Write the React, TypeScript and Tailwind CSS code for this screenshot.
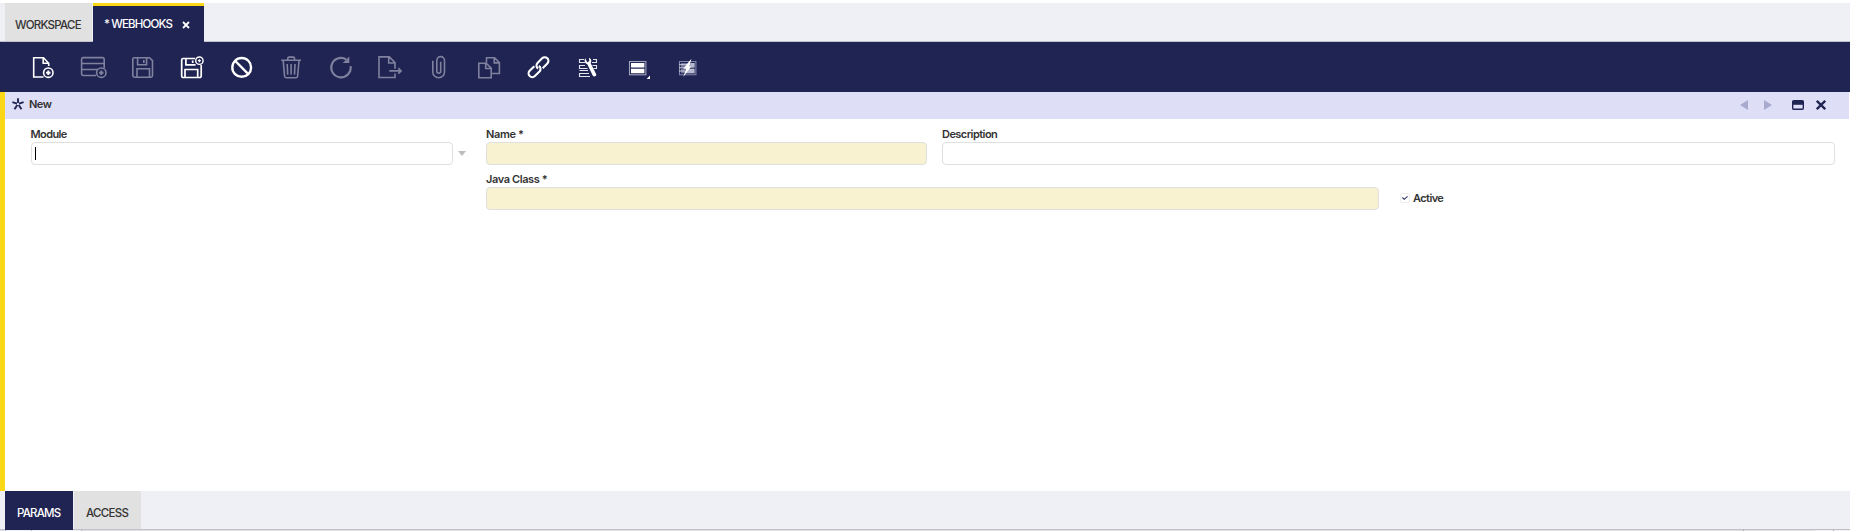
import React from "react";

type IconProps = { children: React.ReactNode; slot: string; dim?: boolean };

function Tool({ children, slot, dim }: IconProps) {
  return (
    <button className={`${slot} ${dim ? "text-[#7f819e]" : "text-white"} h-[30px] shrink-0`}>
      <svg width="30" height="30" viewBox="0 0 30 30" fill="none" stroke="currentColor" strokeWidth="1.6" className="block">
        {children}
      </svg>
    </button>
  );
}

function Toolbar() {
  return (
    <div className="flex h-[50px] items-center bg-[#202452] pl-7">
      <Tool slot="w-[50px]">
        <path d="M15.5 25H5.7V5.7h9.8l5.2 5.5V14M15.2 5.7v5.6h5.5" />
        <circle cx="20.3" cy="20.7" r="4.7" />
        <path d="M20.3 18.5v4.4M18.1 20.7h4.4" strokeWidth="1.9" />
      </Tool>
      <Tool slot="w-[49px]" dim>
        <path d="M18 23.5H5.2a1.6 1.6 0 0 1-1.6-1.6V7.2a1.6 1.6 0 0 1 1.6-1.6h19.4a1.6 1.6 0 0 1 1.6 1.6V16M3.6 11.5h22.6M3.6 17.5h16" />
        <circle cx="23.3" cy="20.7" r="4.7" />
        <path d="M23.3 18.5v4.4M21.1 20.7h4.4" strokeWidth="1.9" />
      </Tool>
      <Tool slot="w-[50px]" dim>
        <path d="M6.9 5.7h15.6l3 3v14.9a1.6 1.6 0 0 1-1.6 1.6H7.4a1.6 1.6 0 0 1-1.6-1.6V7a1.3 1.3 0 0 1 1.1-1.3ZM10.6 5.7v7h9v-7M16.8 8v3M10 25v-8.2h12.5V25" />
      </Tool>
      <Tool slot="w-[50px]">
        <path d="M18 6.5H6.1A1.4 1.4 0 0 0 4.7 7.9v16.2a1.4 1.4 0 0 0 1.4 1.4h16.7a1.4 1.4 0 0 0 1.4-1.4V13M8.9 6.5v6.4h9.7M15.7 8.5v2.4M8 25.5v-8h12.7v8" strokeWidth="1.7" />
        <circle cx="22.4" cy="8.7" r="3.7" strokeWidth="1.4" />
        <path d="M22.4 7.2v3M20.9 8.7h3" strokeWidth="1.3" />
      </Tool>
      <Tool slot="w-[49px]">
        <circle cx="14.7" cy="15.4" r="9.4" strokeWidth="2.4" />
        <path d="m8.3 9 12.8 12.8" strokeWidth="2.4" />
      </Tool>
      <Tool slot="w-[50px]" dim>
        <path d="M5.2 8.3H25M11.8 8V6.2c0-.7.5-1.1 1.2-1.1h4.3c.7 0 1.2.4 1.2 1.1V8M7.2 8.7l1.4 15.6a1.5 1.5 0 0 0 1.5 1.4h10a1.5 1.5 0 0 0 1.5-1.4L23 8.7M11.2 12l.5 10.6M15.1 12v10.6M19 12l-.5 10.6" />
      </Tool>
      <Tool slot="w-[49px]" dim>
        <path d="M20 7.3a9.7 9.7 0 1 0 4.6 6.9" strokeWidth="2.2" />
        <path d="M23.3 4.5v6.6h-6.6Z" fill="currentColor" stroke="none" />
      </Tool>
      <Tool slot="w-[50px]" dim>
        <path d="M20 21.5v4H4V4.9h10.3l5.7 5.8v6M13.7 5v6H20M14.3 18.9h12M23.3 16.2l2.8 2.7-2.8 2.7" />
      </Tool>
      <Tool slot="w-[49px]" dim>
        <path d="M7.8 8.7v11.2a5.8 5.8 0 0 0 11.7 0V8.5a3.8 3.8 0 0 0-7.7 0v10.8a1.9 1.9 0 0 0 3.9 0V9.8" />
      </Tool>
      <Tool slot="w-[50px]" dim>
        <path d="M12.5 10.5V5.7h8.1l4.8 4.9v10.9h-8M20.2 6v4.9h5M4.8 11.2h7.4l5 5v9.6H4.8ZM11.7 11.5v5h5.2" />
      </Tool>
      <Tool slot="w-[49px]">
        <g strokeWidth="2.1" transform="rotate(-45 14.5 15.2)">
          <path d="M12.3 11.5H5.7a3.7 3.7 0 0 0 0 7.4h6.5a3.7 3.7 0 0 0 3.6-4.4M16.7 18.9h6.6a3.7 3.7 0 0 0 0-7.4h-6.5a3.7 3.7 0 0 0-3.6 4.4" />
        </g>
      </Tool>
      <Tool slot="w-[50px]">
        <path d="M11 7.5H6.5v3H12M20 7.5h3.5v3H19M12 13.5H6.5v3h8M19.5 13.5h4v3h-3M15 18.5H6.5M17 24.5H6.5v-3h9.5" stroke="#e2e3ec" strokeWidth="1.1" />
        <path d="M12.2 6.3c-1.2 2.2-.4 5.1 2.1 6l5.4 11.3c.9 1.7 4.3.6 3.5-1.4l-5.5-10.9c1.3-2.1.6-4.7-1.7-5.5l.3 3.4-2.1 1Z" fill="currentColor" stroke="none" />
      </Tool>
      <Tool slot="w-[50px]">
        <rect x="6.5" y="9.5" width="16.4" height="13.3" stroke="#a1a4be" strokeWidth="1.1" />
        <path d="M8 11h13.4v4.6H8ZM8 16.7h13.4v4.6H8Z" fill="currentColor" stroke="none" />
        <path d="M27 23.6V27h-3.4Z" fill="currentColor" stroke="none" />
      </Tool>
      <Tool slot="w-[50px]">
        <path d="M6.5 9.5h16.4v13.3H6.5Z" stroke="#8286a8" strokeWidth="1.1" />
        <path d="M8 11h13.5v4.5H8ZM8 16.8h13.5v4.5H8Z" fill="#70749a" stroke="none" />
        <path d="M18 11h3.5v4.5h-5ZM14.5 16.8h7v4.5h-9Z" fill="#b9bbd0" stroke="none" />
        <path d="M6 12.7h9M6 15.8h7M6 19h6" stroke="#cfd0df" strokeWidth="1" />
        <path d="m18.4 6.8-8.2 10h3L10.2 25l8-10.5h-1.8Z" fill="currentColor" stroke="none" />
      </Tool>
    </div>
  );
}

const box = "h-[23px] rounded-[4px] border border-[#dfdfdf]";
const label = "block h-[15px] whitespace-nowrap text-[11px] leading-[15px] font-semibold text-[#333]";

export default function App() {
  return (
    <div className="flex h-[531px] w-[1850px] flex-col overflow-hidden bg-white pt-[3px] font-['Inter',sans-serif]">
      <div className="flex h-[39px] border-b border-[#bfc2cc] bg-[#eff0f5] pl-[5px]">
        <div className="mr-px flex h-[38px] w-[87px] items-center bg-[#e1e1e1] pt-[8px] pl-[10px] text-[11.5px] font-medium tracking-[-0.74px] text-[#333]">
          WORKSPACE
        </div>
        <div className="flex h-[39px] w-[111px] items-center border-t-[3px] border-[#fcd716] bg-[#202452] pt-px pl-[11px] text-[11.5px] font-medium tracking-[-0.85px] whitespace-nowrap text-white">
          <span className="w-[78px]">* WEBHOOKS</span>
          <svg width="8" height="8" viewBox="0 0 8 8" stroke="currentColor" strokeWidth="1.8"><path d="m1 1 6 6M7 1 1 7" /></svg>
        </div>
      </div>
      <Toolbar />
      <div className="h-[399px] border-l-[5px] border-[#fcd716]">
        <div className="mr-px flex h-[27px] items-center bg-[#dedff6] pl-[7px] text-[#202452]">
          <svg width="12" height="12" viewBox="0 0 12 12" className="mt-[-4px]" stroke="currentColor" strokeWidth="1.9">
            <path d="M6 .2V5M.4 4.2 5 5.7M11.6 4.2 7 5.7M2.5 11.3 5.3 7M9.5 11.3 6.7 7" />
          </svg>
          <span className="mt-[-3px] ml-[5px] text-[11px] font-semibold tracking-[-0.5px] text-[#333]">New</span>
          <div className="mt-[-1px] mr-[23px] ml-auto flex items-center">
            <svg width="8" height="10" viewBox="0 0 8 10" fill="#a9aacf"><path d="M8 0v10L0 5Z" /></svg>
            <svg width="8" height="10" viewBox="0 0 8 10" fill="#a9aacf" className="ml-[16px]"><path d="M0 0v10l8-5Z" /></svg>
            <svg width="12" height="10" viewBox="0 0 12 10" className="ml-[20px]">
              <rect x=".7" y=".7" width="10.6" height="8.6" rx="1" fill="none" stroke="currentColor" strokeWidth="1.4" />
              <path d="M.5 1h11v3.8H.5Z" fill="currentColor" />
            </svg>
            <svg width="10" height="10" viewBox="0 0 10 10" className="ml-[12px]" stroke="currentColor" strokeWidth="2.3"><path d="m.8.8 8.4 8.4M9.2.8.8 9.2" /></svg>
          </div>
        </div>
        <div className="grid grid-cols-[455px_456px_437px_456px] gap-y-[7px] pt-[8px] pl-[26px]">
          <div>
            <label className={label + " ml-[-0.5px] tracking-[-0.6px]"}>Module</label>
            <div className="flex items-center">
              <div className={box + " flex w-[422px] items-center bg-white pl-[3px]"}><span className="h-[13px] w-px bg-black" /></div>
              <svg width="8" height="5" viewBox="0 0 8 5" fill="#bdbdbd" className="ml-[5px]"><path d="M0 0h8L4 5Z" /></svg>
            </div>
          </div>
          <div>
            <label className={label + " tracking-[-0.35px]"}>Name *</label>
            <div className={box + " w-[441px] bg-[#f9f2d0]"} />
          </div>
          <div className="col-span-2">
            <label className={label + " tracking-[-0.55px]"}>Description</label>
            <div className={box + " w-[893px] bg-white"} />
          </div>
          <div className="col-span-2 col-start-2">
            <label className={label + " tracking-[-0.4px]"}>Java Class *</label>
            <div className={box + " w-[893px] bg-[#f9f2d0]"} />
          </div>
          <div className="flex items-center self-end pb-[4px] pl-[21px]">
            <span className="mt-[-2px] flex size-[10px] items-center justify-center rounded-[2px] border border-[#eee]">
              <svg width="6" height="4" viewBox="0 0 6 4" fill="none" stroke="#333a65" strokeWidth="1.1"><path d="m.4 1.5 1.8 1.8L5.6.4" /></svg>
            </span>
            <span className="ml-[3px] text-[11px] leading-[15px] font-semibold tracking-[-0.58px] text-[#333]">Active</span>
          </div>
        </div>
      </div>
      <div className="flex h-[39px] shrink-0 border-b border-[#c0c0c8] bg-[#eff0f5] pl-[5px]">
        <div className="mr-px flex h-[39px] w-[68px] items-center bg-[#202452] pt-[7px] pl-[12px] text-[11.5px] font-medium tracking-[-0.82px] text-white">PARAMS</div>
        <div className="flex h-[38px] w-[67px] items-center bg-[#e1e1e1] pt-[8px] pl-[12px] text-[11.5px] font-medium tracking-[-0.7px] text-[#333]">ACCESS</div>
      </div>
      <div className="flex h-px shrink-0 bg-[#e1e1e1]">
        <div className="w-[5px] bg-[#dedff6]" />
        <div className="w-px bg-[#b5b6c5]" />
        <div className="w-[25px] bg-[#eff0f5]" />
        <div className="w-px bg-[#b5b6c5]" />
        <div className="w-[49px] bg-[#eff0f5]" />
        <div className="w-px bg-[#b5b6c5]" />
        <div className="w-[1661px]" />
        <div className="w-px bg-[#a5a6b0]" />
        <div className="w-[71px]" />
        <div className="w-[18px] bg-[#eff0f5]" />
        <div className="w-px bg-[#a5a6b0]" />
        <div className="grow bg-[#eff0f5]" />
      </div>
    </div>
  );
}
